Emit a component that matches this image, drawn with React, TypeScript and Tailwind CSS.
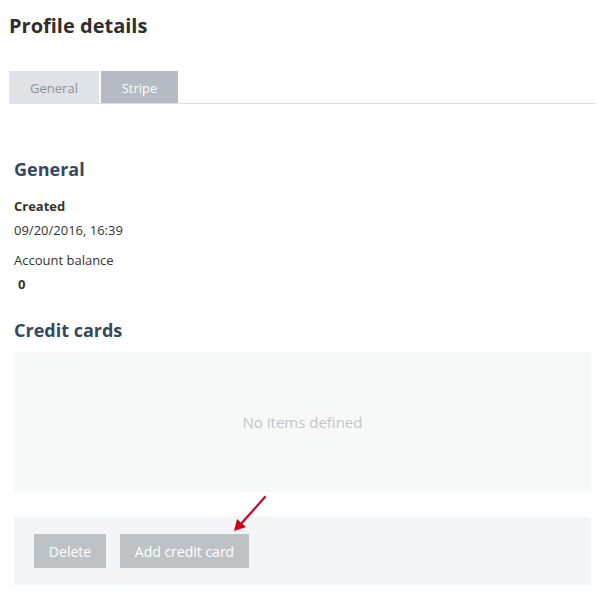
import React from "react";

export default function App() {
  return (
    <div
      className="w-[607px] h-[598px] bg-white text-[#333333] relative"
      style={{ fontFamily: '"Open Sans", "Liberation Sans", sans-serif' }}
    >
      <div className="pl-[9px] pr-[11px] pt-[12px]">
        <h1 className="text-[20px] font-bold leading-[27px] text-[#2e2e2e]">Profile details</h1>
        <div className="mt-[32px] flex gap-[2px] border-b border-[#dcdfe3] h-[33px]">
          <div className="w-[90px] h-[32px] pt-[3px] bg-[#dfe2e6] text-[#8a9096] text-[13px] flex items-center justify-center">
            General
          </div>
          <div className="w-[77px] h-[32px] pt-[3px] bg-[#b4bbc2] text-white text-[13px] flex items-center justify-center">
            Stripe
          </div>
        </div>
      </div>
      <div className="pl-[14px] pr-[16px]">
        <h2 className="mt-[53px] text-[18px] font-bold leading-[24px] text-[#34495e]">General</h2>
        <div className="mt-[16px] text-[13px] font-bold leading-[18px]">Created</div>
        <div className="mt-[6px] text-[13px] leading-[18px]">09/20/2016, 16:39</div>
        <div className="mt-[12px] text-[13px] leading-[18px]">Account balance</div>
        <div className="mt-[6px] pl-[4px] text-[13px] font-bold leading-[18px]">0</div>
        <h2 className="mt-[25px] text-[18px] font-bold leading-[24px] text-[#34495e]">Credit cards</h2>
        <div className="mt-[10px] h-[140px] bg-[#f7f8f8] flex items-center justify-center text-[15px] text-[#c3c6c9]">
          No items defined
        </div>
        <div className="mt-[25px] h-[68px] bg-[#f4f5f7] flex items-center gap-[14px] pl-[20px]">
          <div className="w-[72px] h-[34px] bg-[#bdc2c6] text-white text-[14px] flex items-center justify-center">
            Delete
          </div>
          <div className="w-[129px] h-[34px] bg-[#bdc2c6] text-white text-[14px] flex items-center justify-center">
            Add credit card
          </div>
        </div>
      </div>
      <svg className="absolute left-[228px] top-[492px]" width="44" height="44" viewBox="0 0 44 44">
        <line x1="37" y1="5" x2="12" y2="33" stroke="#d0021b" strokeWidth="2.2" strokeLinecap="round" />
        <polygon points="6,39 9,27 18,35" fill="#d0021b" />
      </svg>
    </div>
  );
}
